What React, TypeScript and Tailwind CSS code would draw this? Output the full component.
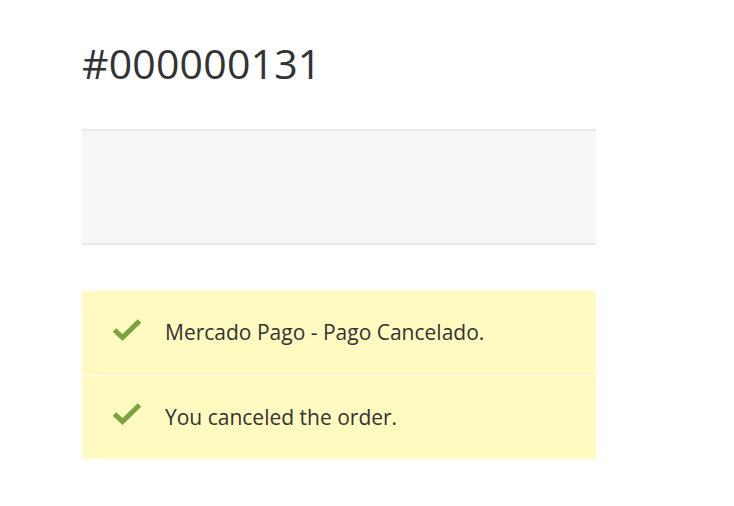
import React from 'react';

function Check() {
  return (
    <svg width="30" height="23" viewBox="0 0 30 23" className="mb-[8px] shrink-0">
      <path d="M2.5 12 L10.5 19.5 L27.5 3" fill="none" stroke="#78a33e" strokeWidth="5" strokeLinecap="butt" strokeLinejoin="miter" />
    </svg>
  );
}

const messages = ['Mercado Pago - Pago Cancelado.', 'You canceled the order.'];

export default function App() {
  return (
    <div className="min-h-[506px] bg-white pl-[82px] pt-[33px] font-['Open_Sans',sans-serif] text-[#333]">
      <div className="w-[514px]">
        <h1 className="text-[41px] leading-[60px] font-normal tracking-[0.2px] text-[#333]">#000000131</h1>

        {/* empty grey block */}
        <div className="mt-[36px] h-[116px] border-y-2 border-[#e8e8e8] bg-[#f7f7f7]" />

        {/* messages */}
        <div className="mt-[46px] flex flex-col">
          {messages.map((msg, idx) => (
            <div
              key={idx}
              className={`flex h-[84px] items-center bg-[#fffac0] pl-[30px] ${idx > 0 ? 'border-t border-white' : ''}`}
            >
              <Check />
              <span className="ml-[23px] text-[21px] text-[#333]">{msg}</span>
            </div>
          ))}
        </div>
      </div>
    </div>
  );
}
